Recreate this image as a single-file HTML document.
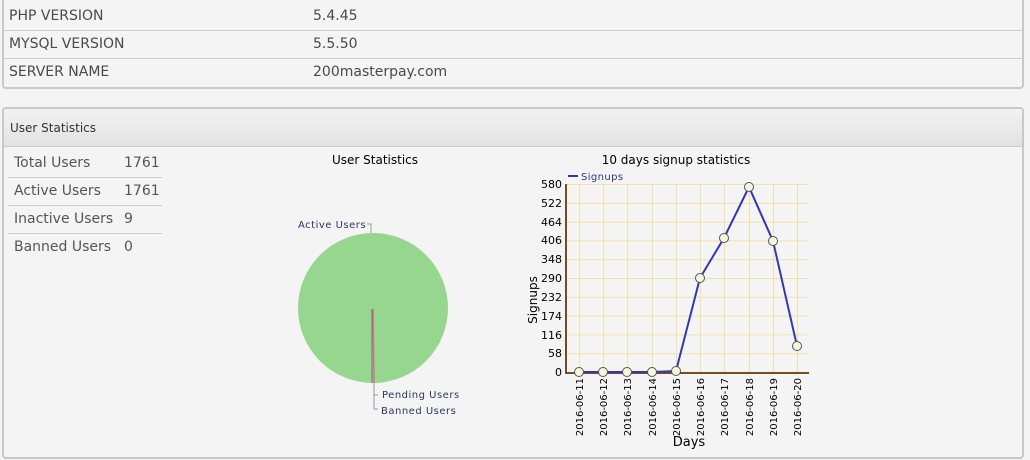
<!DOCTYPE html>
<html><head><style>
body{margin:0;background:#f4f4f4;font-family:"DejaVu Sans","Liberation Sans",sans-serif;color:#4a4a4a;width:1030px;height:460px;overflow:hidden;position:relative}
.p1{position:absolute;left:2px;top:-4px;width:1018px;height:89px;border:2px solid #c8c8c8;border-radius:4px;background:#f4f4f4}
.row{position:absolute;left:0;width:1018px;height:27px;font-size:14px;line-height:27px;border-top:1px solid #ccc}
.row span{position:absolute;left:5px}.row b{font-weight:normal;position:absolute;left:309px}
.p2{position:absolute;left:2px;top:107px;width:1018px;height:348px;border:2px solid #c8c8c8;border-radius:4px;background:#f4f4f4}
.hd{height:37px;border-bottom:1px solid #ccc;background:linear-gradient(#f2f2f2,#e2e2e2);font-size:12px;line-height:38px;padding-left:6px;color:#333}
.st{position:absolute;left:8px;width:154px;height:27px;border-bottom:1px solid #ccc;font-size:14px;line-height:27px;color:#555}
.st span{position:absolute;left:6px}.st b{font-weight:normal;position:absolute;left:116px}
svg{position:absolute;left:0;top:0}
</style></head><body>
<div class="p1">
<div class="row" style="top:5px;border-top:none"><span>PHP VERSION</span><b>5.4.45</b></div>
<div class="row" style="top:32px"><span>MYSQL VERSION</span><b>5.5.50</b></div>
<div class="row" style="top:60px"><span>SERVER NAME</span><b>200masterpay.com</b></div>
</div>
<div class="p2"><div class="hd">User Statistics</div></div>
<div class="st" style="top:150px"><span>Total Users</span><b>1761</b></div>
<div class="st" style="top:178px"><span>Active Users</span><b>1761</b></div>
<div class="st" style="top:206px"><span>Inactive Users</span><b>9</b></div>
<div class="st" style="top:234px;border-bottom:none"><span>Banned Users</span><b>0</b></div>
<svg width="1030" height="460" font-family="DejaVu Sans, Liberation Sans, sans-serif">
<text x="375" y="164" font-size="12" text-anchor="middle" fill="#000">User Statistics</text>
<circle cx="373" cy="308" r="75" fill="#96d68e"/>
<line x1="373" y1="309" x2="374" y2="383" stroke="#e07070" stroke-width="1.5"/>
<line x1="372" y1="309" x2="372" y2="383" stroke="#6a6a9a" stroke-width="1"/>
<path d="M367 224h4v9" fill="none" stroke="#8a8" />
<text x="298" y="228" font-size="10" fill="#336" letter-spacing=".5">Active Users</text>
<path d="M374 383v12h4M374 395v14h4" fill="none" stroke="#99a"/>
<text x="382" y="398" font-size="10" fill="#336" letter-spacing=".5">Pending Users</text>
<text x="381" y="414" font-size="10" fill="#336" letter-spacing=".5">Banned Users</text>
<text x="676" y="164" font-size="12" text-anchor="middle" fill="#000">10 days signup statistics</text>
<line x1="568" y1="176" x2="578" y2="176" stroke="#33a" stroke-width="2"/>
<text x="581" y="180" font-size="10" fill="#338" letter-spacing=".4">Signups</text>
<g stroke="#f3dfa8" stroke-width="1">
<path d="M567 184.5H808M567 203.3H808M567 222.1H808M567 240.9H808M567 259.7H808M567 278.5H808M567 297.3H808M567 316.1H808M567 334.9H808M567 353.7H808"/>
<path d="M579.5 184V372M603.5 184V372M627.5 184V372M652.5 184V372M676.5 184V372M700.5 184V372M724.5 184V372M749.5 184V372M773.5 184V372M797.5 184V372"/>
</g>
<path d="M566 184V373H809" fill="none" stroke="#7a4a20" stroke-width="2"/>
<g font-size="11" fill="#000" text-anchor="end">
<text x="562" y="188">580</text><text x="562" y="207">522</text><text x="562" y="226">464</text><text x="562" y="244">406</text><text x="562" y="263">348</text><text x="562" y="282">290</text><text x="562" y="301">232</text><text x="562" y="320">174</text><text x="562" y="339">116</text><text x="562" y="357">58</text><text x="562" y="376">0</text>
</g>
<text transform="translate(537,300) rotate(-90)" font-size="12" text-anchor="middle" fill="#000">Signups</text>
<g font-size="10" fill="#000" text-anchor="end">
<text transform="translate(583,378) rotate(-90)">2016-06-11</text>
<text transform="translate(607,378) rotate(-90)">2016-06-12</text>
<text transform="translate(631,378) rotate(-90)">2016-06-13</text>
<text transform="translate(656,378) rotate(-90)">2016-06-14</text>
<text transform="translate(680,378) rotate(-90)">2016-06-15</text>
<text transform="translate(704,378) rotate(-90)">2016-06-16</text>
<text transform="translate(728,378) rotate(-90)">2016-06-17</text>
<text transform="translate(753,378) rotate(-90)">2016-06-18</text>
<text transform="translate(777,378) rotate(-90)">2016-06-19</text>
<text transform="translate(801,378) rotate(-90)">2016-06-20</text>
</g>
<text x="689" y="446" font-size="13" text-anchor="middle" fill="#000">Days</text>
<polyline points="579,372 603,372 627,372 652,372 676,371 700,278 724,238 749,187 773,241 797,346" fill="none" stroke="#3535bb" stroke-width="2"/>
<g fill="#f5f5e0" stroke="#555" stroke-width="1">
<circle cx="579" cy="372" r="4.5"/><circle cx="603" cy="372" r="4.5"/><circle cx="627" cy="372" r="4.5"/><circle cx="652" cy="372" r="4.5"/><circle cx="676" cy="371" r="4.5"/><circle cx="700" cy="278" r="4.5"/><circle cx="724" cy="238" r="4.5"/><circle cx="749" cy="187" r="4.5"/><circle cx="773" cy="241" r="4.5"/><circle cx="797" cy="346" r="4.5"/>
</g>
</svg>
</body></html>
